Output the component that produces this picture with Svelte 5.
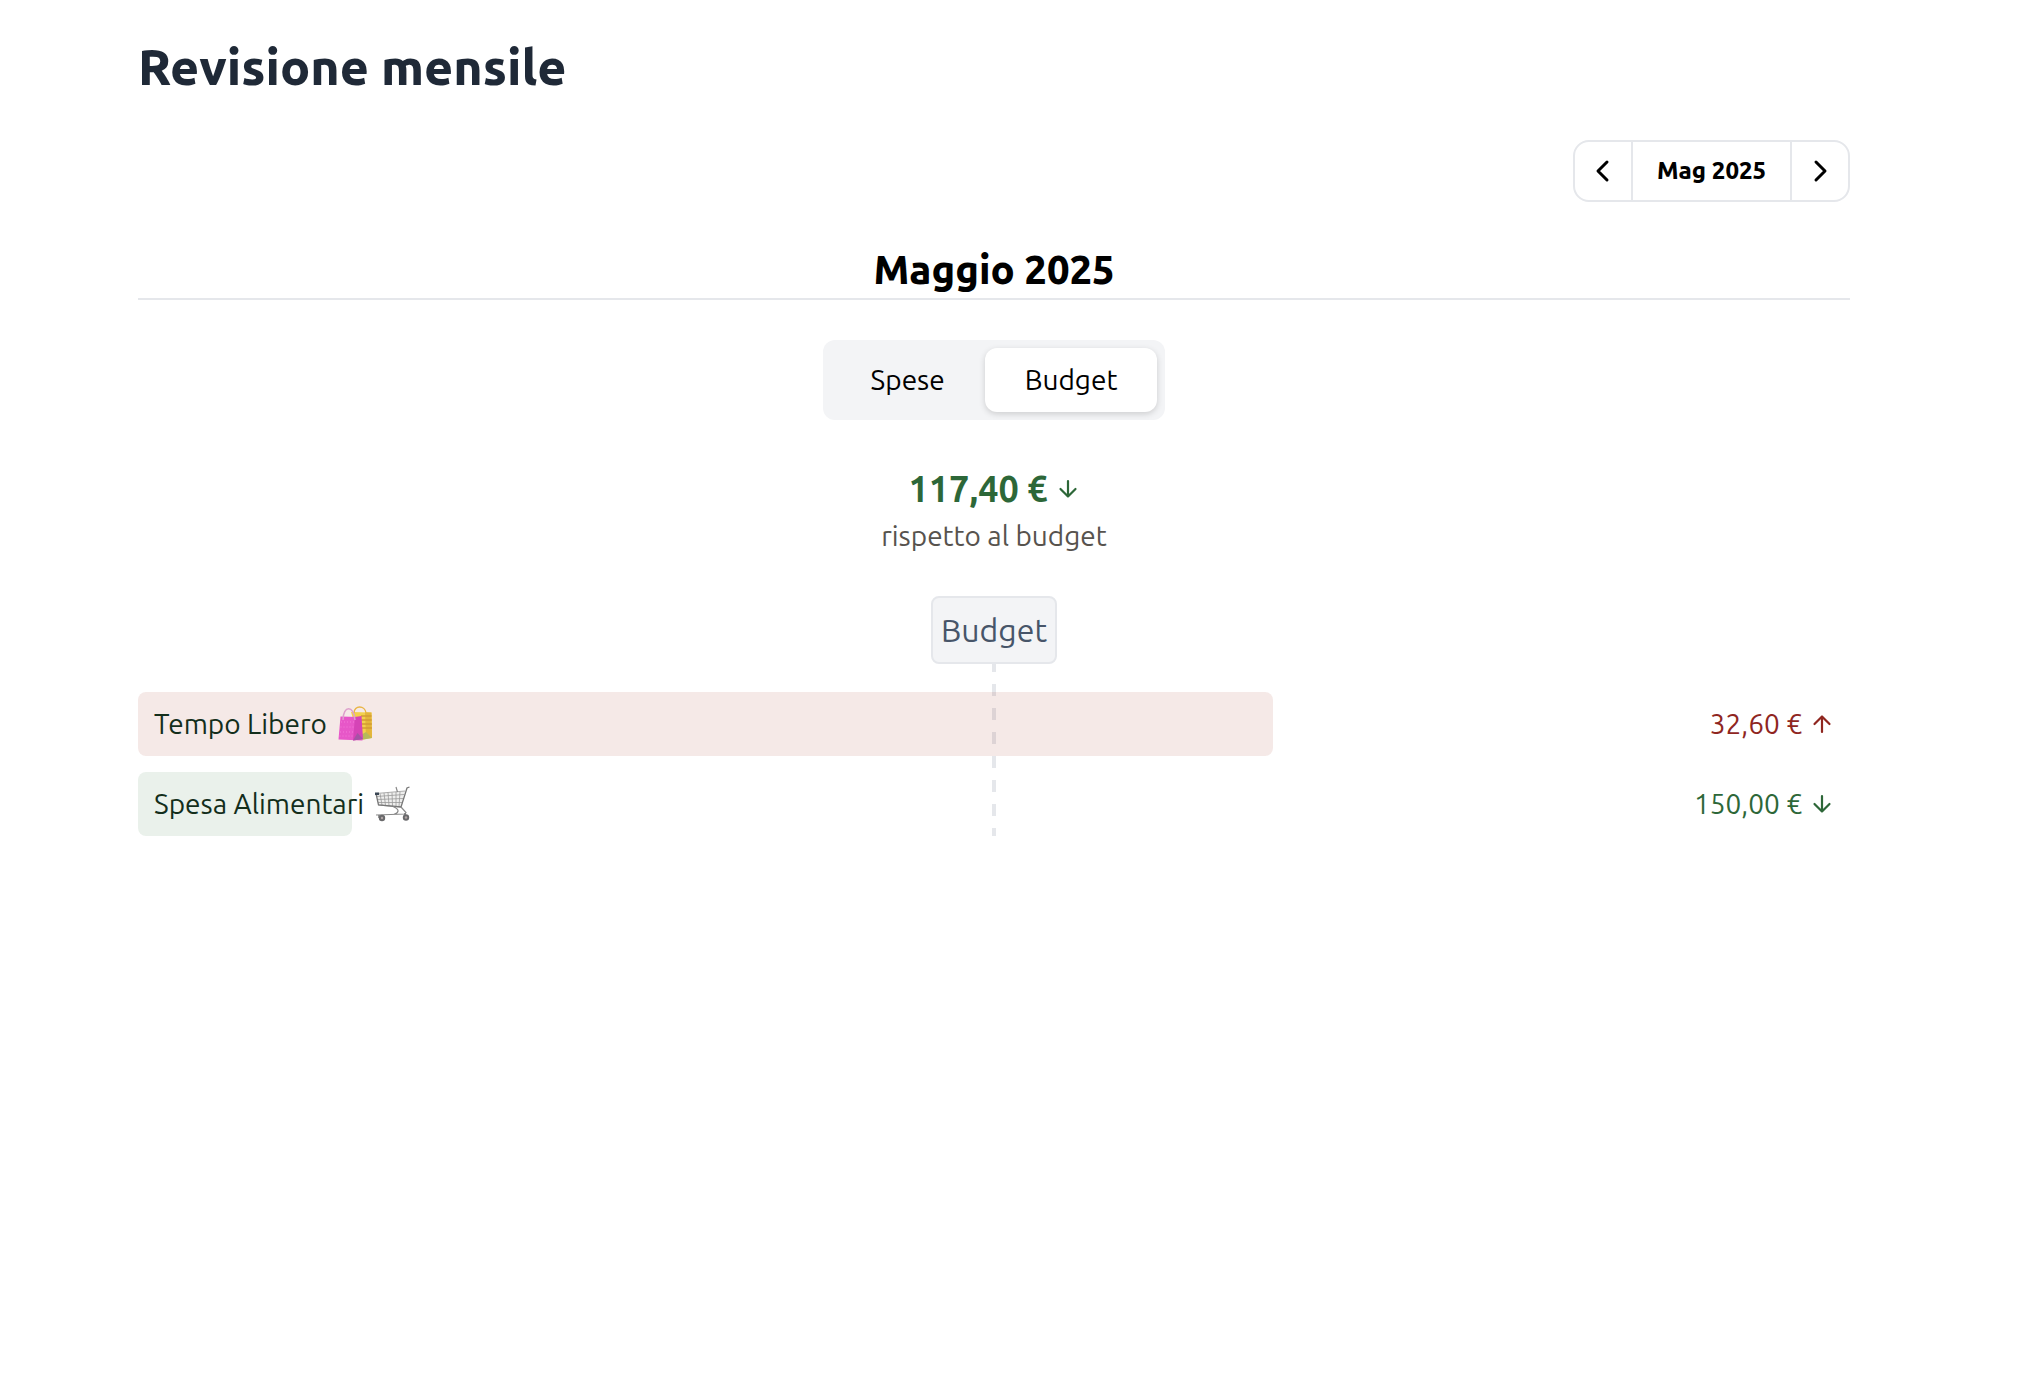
<script>
  const months = [
    'Gennaio', 'Febbraio', 'Marzo', 'Aprile', 'Maggio', 'Giugno',
    'Luglio', 'Agosto', 'Settembre', 'Ottobre', 'Novembre', 'Dicembre'
  ];

  let month = $state(4);
  let year = $state(2025);
  let view = $state('Budget');

  const categories = [
    { name: 'Tempo Libero', icon: 'bags', amount: '32,60 €', over: true, share: 66.3 },
    { name: 'Spesa Alimentari', icon: 'cart', amount: '150,00 €', over: false, share: 12.5 }
  ];

  function shift(step) {
    const next = month + step;
    year += Math.floor(next / 12);
    month = (next + 12) % 12;
  }
</script>

{#snippet arrow(up)}
  <svg class="arrow" viewBox="0 0 24 24" aria-hidden="true">
    {#if up}
      <path d="M12 20V4.500M4.500 12L12 4.500L19.500 12" />
    {:else}
      <path d="M12 4V19.500M4.500 12L12 19.500L19.500 12" />
    {/if}
  </svg>
{/snippet}

{#snippet bags()}
  <svg class="emoji" viewBox="0 0 36 36" aria-hidden="true">
    <path d="M14 6L34.500 6.500L35 32L22 34Z" fill="#f3d04c" />
    <path d="M28 6.300L34.500 6.500L35 32L29 31Z" fill="#e3b53a" />
    <path d="M24 10H34.500M24 14H34.700M24 18H34.800M24 22H34.900" stroke="#d39a35" stroke-width="1.400" />
    <path d="M24 29L29 26L35 32L24 34Z" fill="#b7b95a" />
    <path d="M17 7C17 -1 28 -1 29 7" fill="none" stroke="#e9b545" stroke-width="1.400" />
    <path d="M3.500 10.500L22 11L25.500 34.500L1.500 33.500Z" fill="#e757c8" />
    <path d="M18 11L24.500 10L26 33L16 34.500Z" fill="#d544b6" />
    <path d="M16 34.500L20.500 27L26 33Z" fill="#a553a5" />
    <path d="M4 16H17M3.500 21H17M3 26H16M2.500 30H16" stroke="#f27bd8" stroke-width="1" stroke-dasharray="1 2" />
    <path d="M6 14C6 -1 17 -1 18 14" fill="none" stroke="#dda0cc" stroke-width="1.500" />
  </svg>
{/snippet}

{#snippet cart()}
  <svg class="emoji" viewBox="0 0 36 36" aria-hidden="true">
    <path d="M2 7.500L31 5L27 21L4.500 19Z" fill="#eeeeed" />
    <path d="M2 7.500L31 5M2.500 10.500L30 8.500M3 13.500L29 12.500M4 16.500L28 16.500M4.500 19L27 21M6 7.500L8 19M10 7L11.500 19.500M14 6.500L15 19.500M18 6.500L18.500 20M22 6L22 20.500M26 6L25 20.500" fill="none" stroke="#999" stroke-width="0.800" />
    <path d="M35.500 1L33 2L27 21L4.500 19L2 7.500" fill="none" stroke="#777" stroke-width="1.300" />
    <path d="M22 1L23.500 6M27 21L32 26.500L31 28L2 29M19 20.500C25 23 26 26 20 28.500" fill="none" stroke="#898989" stroke-width="1.200" />
    <path d="M1 6.500H5V9H1Z" fill="#3a4654" />
    <path d="M5 29V32M31 27V31" stroke="#777" stroke-width="1.500" />
    <circle cx="8" cy="32" r="3.200" fill="#69696b" />
    <circle cx="32" cy="31.500" r="3.200" fill="#69696b" />
    <circle cx="8" cy="32" r="1.200" fill="#b0a5a5" />
    <circle cx="32" cy="31.500" r="1.200" fill="#b0a5a5" />
  </svg>
{/snippet}

<main>
  <h1>Revisione mensile</h1>

  <nav class="picker" aria-label="Mese">
    <button type="button" aria-label="Mese precedente" onclick={() => shift(-1)}>
      <svg class="chevron" viewBox="0 0 24 24" aria-hidden="true"><path d="M16 3L7 12L16 21" /></svg>
    </button>
    <button type="button" class="current">{months[month].slice(0, 3)} {year}</button>
    <button type="button" aria-label="Mese successivo" onclick={() => shift(1)}>
      <svg class="chevron" viewBox="0 0 24 24" aria-hidden="true"><path d="M8 3L17 12L8 21" /></svg>
    </button>
  </nav>

  <h2>{months[month]} {year}</h2>

  <div class="tabs" role="group" aria-label="Vista">
    {#each ['Spese', 'Budget'] as option}
      <button
        type="button"
        class:active={view === option}
        aria-pressed={view === option}
        onclick={() => (view = option)}>{option}</button>
    {/each}
  </div>

  <section class="summary">
    <p class="total">117,40 € {@render arrow(false)}</p>
    <p class="caption">rispetto al budget</p>
  </section>

  <section class="chart">
    <div class="marker">Budget</div>
    <ul>
      {#each categories as item}
        <li class:over={item.over}>
          <div class="bar" style:width="{item.share}%"></div>
          <span class="name">
            {item.name}
            {#if item.icon === 'bags'}{@render bags()}{:else}{@render cart()}{/if}
          </span>
          <span class="amount">{item.amount} {@render arrow(item.over)}</span>
        </li>
      {/each}
    </ul>
  </section>
</main>

<style>
  :global(body) {
    margin: 0;
    background: #fff;
  }

  main {
    display: flex;
    flex-direction: column;
    align-items: center;
    padding: 30px 176px 32px 138px;
    font-family: Ubuntu, 'Noto Sans', sans-serif;
    font-size: 28px;
    line-height: 40px;
    color: #000;
  }

  h1, h2, p, ul {
    margin: 0;
    padding: 0;
  }

  h1 {
    align-self: flex-start;
    font-size: 50px;
    font-weight: 800;
    line-height: 72px;
    color: #1f2937;
  }

  button {
    border: 0;
    padding: 0;
    background: none;
    color: inherit;
    font: inherit;
    cursor: pointer;
  }

  svg {
    flex: none;
    fill: none;
  }

  .picker {
    align-self: flex-end;
    display: flex;
    margin-top: 38px;
    border: 2px solid #e5e7eb;
    border-radius: 16px;
  }

  .picker button {
    display: flex;
    align-items: center;
    justify-content: center;
    width: 56px;
    height: 58px;
  }

  .picker .current {
    width: auto;
    padding: 0 24px;
    border: solid #e5e7eb;
    border-width: 0 2px;
    font-size: 24px;
    font-weight: 800;
  }

  .chevron {
    width: 24px;
    height: 24px;
    stroke: currentColor;
    stroke-width: 3;
    stroke-linecap: round;
    stroke-linejoin: round;
  }

  h2 {
    align-self: stretch;
    margin-top: 40px;
    border-bottom: 2px solid #e5e7eb;
    font-size: 40px;
    font-weight: 800;
    line-height: 56px;
    text-align: center;
  }

  .tabs {
    display: flex;
    margin-top: 40px;
    padding: 8px;
    border-radius: 12px;
    background: #f3f4f6;
  }

  .tabs button {
    height: 64px;
    padding: 0 40px;
    border-radius: 12px;
  }

  .tabs .active {
    background: #fff;
    box-shadow: 0 2px 6px rgb(0 0 0 / 16%);
  }

  .summary {
    display: flex;
    flex-direction: column;
    align-items: center;
    margin-top: 42px;
  }

  .total {
    display: flex;
    align-items: center;
    gap: 8px;
    font-size: 36px;
    line-height: 54px;
    font-weight: 700;
    color: #2d6738;
  }

  .caption {
    color: #57534e;
  }

  .arrow {
    width: 24px;
    height: 24px;
    stroke: currentColor;
    stroke-width: 2.2;
    stroke-linecap: round;
    stroke-linejoin: round;
  }

  .chart {
    position: relative;
    align-self: stretch;
    display: flex;
    flex-direction: column;
    align-items: center;
    margin-top: 40px;
  }

  .chart::before {
    content: '';
    position: absolute;
    top: 16px;
    bottom: 0;
    left: calc(50% - 2px);
    width: 4px;
    background: repeating-linear-gradient(#e5e7eb 0 12px, transparent 12px 24px);
  }

  .marker {
    position: relative;
    padding: 0 8px;
    border: 2px solid #e5e7eb;
    border-radius: 8px;
    background: #f3f4f6;
    font-size: 32px;
    line-height: 64px;
    color: #475569;
  }

  ul {
    align-self: stretch;
    display: flex;
    flex-direction: column;
    gap: 16px;
    margin-top: 28px;
    list-style: none;
  }

  li {
    position: relative;
    display: flex;
    align-items: center;
    justify-content: space-between;
    height: 64px;
    padding: 0 16px;
    color: #2d6738;
  }

  li.over {
    color: #8f261f;
  }

  .bar {
    position: absolute;
    inset: 0 auto 0 0;
    border-radius: 8px;
    background: rgb(45 115 55 / 10%);
  }

  .over .bar {
    background: rgb(155 35 15 / 10%);
  }

  .name, .amount {
    position: relative;
    display: flex;
    align-items: center;
    gap: 8px;
  }

  .name {
    gap: 10px;
    color: #132e1b;
  }

  .emoji {
    width: 36px;
    height: 36px;
  }
</style>
